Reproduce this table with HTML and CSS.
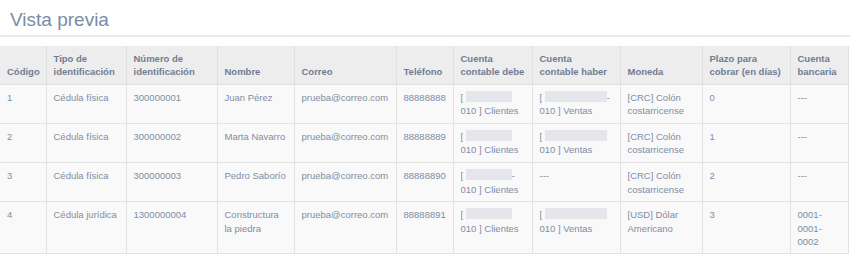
FILE: index.html
```html
<!DOCTYPE html>
<html lang="es">
<head>
<meta charset="utf-8">
<title>Vista previa</title>
<link rel="stylesheet" href="styles.css">
</head>
<body>
<h1 class="title">Vista previa</h1>
<table class="grid">
  <colgroup>
    <col class="c1"><col class="c2"><col class="c3"><col class="c4"><col class="c5"><col class="c6"><col class="c7"><col class="c8"><col class="c9"><col class="c10"><col class="c11">
  </colgroup>
  <thead>
    <tr>
      <th>Código</th>
      <th>Tipo de identificación</th>
      <th>Número de identificación</th>
      <th>Nombre</th>
      <th>Correo</th>
      <th>Teléfono</th>
      <th>Cuenta contable debe</th>
      <th>Cuenta contable haber</th>
      <th>Moneda</th>
      <th>Plazo para cobrar (en días)</th>
      <th>Cuenta bancaria</th>
    </tr>
  </thead>
  <tbody>
    <tr>
      <td>1</td>
      <td>Cédula física</td>
      <td>300000001</td>
      <td>Juan Pérez</td>
      <td>prueba@correo.com</td>
      <td>88888888</td>
      <td>[ <span class="redact r-a"></span><br>010 ] Clientes</td>
      <td>[ <span class="redact r-b"></span>-<br>010 ] Ventas</td>
      <td>[CRC] Colón costarricense</td>
      <td>0</td>
      <td>---</td>
    </tr>
    <tr>
      <td>2</td>
      <td>Cédula física</td>
      <td>300000002</td>
      <td>Marta Navarro</td>
      <td>prueba@correo.com</td>
      <td>88888889</td>
      <td>[ <span class="redact r-a"></span><br>010 ] Clientes</td>
      <td>[ <span class="redact r-b"></span><br>010 ] Ventas</td>
      <td>[CRC] Colón costarricense</td>
      <td>1</td>
      <td>---</td>
    </tr>
    <tr>
      <td>3</td>
      <td>Cédula física</td>
      <td>300000003</td>
      <td>Pedro Saborío</td>
      <td>prueba@correo.com</td>
      <td>88888890</td>
      <td>[ <span class="redact r-a"></span>-<br>010 ] Clientes</td>
      <td>---</td>
      <td>[CRC] Colón costarricense</td>
      <td>2</td>
      <td>---</td>
    </tr>
    <tr>
      <td>4</td>
      <td>Cédula jurídica</td>
      <td>1300000004</td>
      <td>Constructura la piedra</td>
      <td>prueba@correo.com</td>
      <td>88888891</td>
      <td>[ <span class="redact r-a"></span><br>010 ] Clientes</td>
      <td>[ <span class="redact r-b"></span><br>010 ] Ventas</td>
      <td>[USD] Dólar Americano</td>
      <td>3</td>
      <td>0001-<br>0001-<br>0002</td>
    </tr>
  </tbody>
</table>
</body>
</html>
```
FILE: styles.css
```css
html, body {
  margin: 0;
  padding: 0;
  background: #ffffff;
  font-family: "Liberation Sans", Arial, sans-serif;
}

.title {
  margin: 0;
  padding: 9px 10px 5px;
  font-size: 19px;
  line-height: 21px;
  font-weight: normal;
  color: #7a8ca5;
  border-bottom: 2px solid #e6e9ee;
}

.grid {
  margin-top: 9px;
  width: 848px;
  table-layout: fixed;
  border-collapse: collapse;
  font-size: 9.5px;
  line-height: 1.4;
  color: #7f8da5;
}

.c1 { width: 46px; }
.c2 { width: 80px; }
.c3 { width: 91px; }
.c4 { width: 77px; }
.c5 { width: 102px; }
.c6 { width: 57px; }
.c7 { width: 79px; }
.c8 { width: 88px; }
.c9 { width: 82px; }
.c10 { width: 88px; }
.c11 { width: 58px; }

.grid th {
  background: #ededed;
  color: #6f7d94;
  font-weight: bold;
  text-align: left;
  vertical-align: bottom;
  padding: 6px 7px 5px;
  border: 1px solid #e0e0e0;
  border-top: none;
}

.grid td {
  background: #f9f9f9;
  vertical-align: top;
  padding: 6.5px 7px 5px;
  border: 1px solid #e2e2e2;
}

.grid tr > :first-child { border-left: none; }

.redact {
  display: inline-block;
  height: 11px;
  vertical-align: -1px;
  background: #e4e6eb;
  filter: blur(0.6px);
}

.r-a { width: 46px; }
.r-b { width: 62px; }
```
